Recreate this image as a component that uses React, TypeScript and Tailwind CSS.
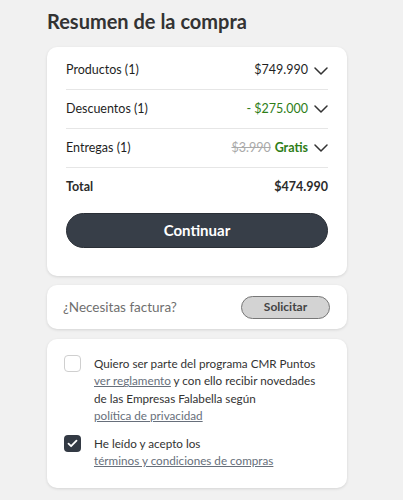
import React from "react";

const Chevron = () => (
  <svg width="14" height="8" viewBox="0 0 14 8" fill="none" className="ml-[6px]">
    <path d="M1 1l6 6 6-6" stroke="#333" strokeWidth="1.5" strokeLinecap="round" strokeLinejoin="round" />
  </svg>
);

export default function App() {
  return (
    <div className="min-h-[500px] w-[403px] bg-[#f1f1f1] pt-[7px] text-[#333] [font-family:Lato,sans-serif]">
      <div className="mx-[47px] w-[300px]">
        <h1 className="text-[20px] font-bold leading-[28px] text-[#333]">Resumen de la compra</h1>
        <div className="mt-[12px] rounded-[10px] bg-white px-[19px] pb-[28px] pt-[5px] shadow-[0_1px_3px_rgba(0,0,0,0.12)]">
          <div className="flex h-[38px] items-center justify-between border-b border-[#e6e6e6] text-[12.5px] text-[#1f1f1f]">
            <span>Productos (1)</span>
            <span className="flex items-center">$749.990<Chevron /></span>
          </div>
          <div className="flex h-[39px] items-center justify-between border-b border-[#e6e6e6] text-[12.5px] text-[#1f1f1f]">
            <span>Descuentos (1)</span>
            <span className="flex items-center text-[#2e7d17]">- $275.000<Chevron /></span>
          </div>
          <div className="flex h-[39px] items-center justify-between border-b border-[#e6e6e6] text-[12.5px] text-[#1f1f1f]">
            <span>Entregas (1)</span>
            <span className="flex items-center">
              <span className="text-[#aaa] line-through">$3.990</span>
              <span className="ml-[4px] font-bold text-[#2e7d17]">Gratis</span>
              <Chevron />
            </span>
          </div>
          <div className="flex h-[39px] items-center justify-between text-[12.5px] font-bold text-[#2b2b2b]">
            <span>Total</span>
            <span>$474.990</span>
          </div>
          <button className="mt-[6px] flex h-[35px] w-full items-center justify-center rounded-full border border-[#2a2f36] bg-[#373e48] text-[15px] font-bold text-white">
            Continuar
          </button>
        </div>

        <div className="mt-[9px] flex h-[44px] items-center justify-between rounded-[10px] bg-white pl-[16px] pr-[17px] shadow-[0_1px_3px_rgba(0,0,0,0.12)]">
          <span className="text-[13.5px] text-[#6f6f6f]">¿Necesitas factura?</span>
          <button className="flex h-[23px] w-[89px] items-center justify-center rounded-full border border-[#777] bg-[#d3d3d3] text-[12px] font-bold text-[#444]">
            Solicitar
          </button>
        </div>

        <div className="mt-[10px] rounded-[10px] bg-white pb-[19px] pl-[17px] pr-[16px] pt-[16px] shadow-[0_1px_3px_rgba(0,0,0,0.12)]">
          <div className="flex items-start">
            <div className="h-[17px] w-[17px] shrink-0 rounded-[4px] border border-[#cfcfcf] bg-white" />
            <p className="ml-[13px] text-[11.7px] leading-[17.4px] text-[#333]">
              Quiero ser parte del programa CMR Puntos
              <br />
              <span className="text-[#676f7b] underline">ver reglamento</span> y con ello recibir novedades
              <br />
              de las Empresas Falabella según
              <br />
              <span className="text-[#676f7b] underline">política de privacidad</span>
            </p>
          </div>
          <div className="mt-[10px] flex items-start">
            <div className="flex h-[17px] w-[17px] shrink-0 items-center justify-center rounded-[4px] bg-[#333a44]">
              <svg width="11" height="9" viewBox="0 0 11 9" fill="none">
                <path d="M1.5 4.6l2.6 2.6L9.5 1.6" stroke="#fff" strokeWidth="1.8" strokeLinecap="round" strokeLinejoin="round" />
              </svg>
            </div>
            <p className="ml-[13px] text-[11.7px] leading-[17.4px] text-[#333]">
              He leído y acepto los
              <br />
              <span className="text-[#676f7b] underline">términos y condiciones de compras</span>
            </p>
          </div>
        </div>
      </div>
    </div>
  );
}
